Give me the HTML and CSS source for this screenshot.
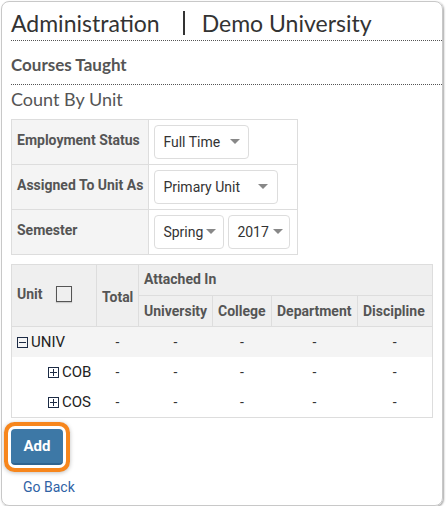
FILE: index.html
```html
<!DOCTYPE html>
<html>
<head>
<meta charset="utf-8">
<link rel="stylesheet" href="styles.css">
</head>
<body>
<div class="frame">
  <h1 class="title"><span>Administration</span><span class="sep"></span><span>Demo University</span></h1>
  <h2 class="section">Courses Taught</h2>
  <h3 class="subsection">Count By Unit</h3>

  <table class="filters">
    <tr>
      <th>Employment Status</th>
      <td><span class="select w-status"><span>Full Time</span><i class="caret"></i></span></td>
    </tr>
    <tr>
      <th>Assigned To Unit As</th>
      <td><span class="select w-unit"><span>Primary Unit</span><i class="caret"></i></span></td>
    </tr>
    <tr>
      <th>Semester</th>
      <td><span class="select w-sem"><span>Spring</span><i class="caret"></i></span><span class="select w-year"><span>2017</span><i class="caret"></i></span></td>
    </tr>
  </table>

  <table class="grid">
    <colgroup>
      <col class="c-unit"><col class="c-total"><col class="c-univ"><col class="c-coll"><col class="c-dept"><col class="c-disc">
    </colgroup>
    <thead>
      <tr>
        <th rowspan="2" class="unit-h"><span>Unit</span><span class="check"></span></th>
        <th rowspan="2" class="total-h">Total</th>
        <th colspan="4" class="attached">Attached In</th>
      </tr>
      <tr>
        <th>University</th><th>College</th><th>Department</th><th>Discipline</th>
      </tr>
    </thead>
    <tbody>
      <tr class="odd">
        <td class="name"><span class="tree minus"></span>UNIV</td>
        <td>-</td><td>-</td><td>-</td><td>-</td><td>-</td>
      </tr>
      <tr>
        <td class="name child"><span class="tree plus"></span>COB</td>
        <td>-</td><td>-</td><td>-</td><td>-</td><td>-</td>
      </tr>
      <tr>
        <td class="name child"><span class="tree plus"></span>COS</td>
        <td>-</td><td>-</td><td>-</td><td>-</td><td>-</td>
      </tr>
    </tbody>
  </table>

  <div class="actions">
    <button class="add">Add</button>
  </div>
  <a class="back" href="#">Go Back</a>
</div>
</body>
</html>
```

FILE: styles.css
```css
html, body {
  margin: 0;
  padding: 0;
  background: #fff;
}
body {
  font-family: Roboto, "Liberation Sans", sans-serif;
  color: #333;
}
.frame {
  margin: 1px 0 0 1px;
  width: 442px;
  height: 505px;
  box-sizing: border-box;
  border: 1px solid #c8c8c8;
  border-radius: 8px;
  box-shadow: 1px 1px 2px rgba(0,0,0,0.35);
  padding: 0 0 0 9px;
  overflow: hidden;
}
.title {
  margin: 0;
  font-family: Lato, "Open Sans", sans-serif;
  font-weight: 400;
  font-size: 23px;
  color: #333;
  line-height: 30px;
  padding: 6px 0 2px;
  border-bottom: 1px dotted #555;
  display: flex;
  align-items: center;
}
.sep {
  display: inline-block;
  width: 2px;
  height: 24px;
  background: #333;
  margin: 0 17px 0 23px;
}
.section {
  margin: 0;
  font-family: Lato, "Open Sans", sans-serif;
  font-weight: 700;
  font-size: 17px;
  color: #555;
  line-height: 20px;
  padding: 14px 0 9px;
  border-bottom: 1px dotted #555;
}
.subsection {
  margin: 0;
  font-family: Lato, "Open Sans", sans-serif;
  font-weight: 400;
  font-size: 18px;
  color: #555;
  line-height: 20px;
  padding: 4px 0 10px;
}
table {
  border-collapse: collapse;
}
.filters {
  border: 1px solid #ddd;
}
.filters th {
  background: #f4f4f4;
  border: 1px solid #ddd;
  text-align: left;
  font-size: 14px;
  font-weight: 700;
  color: #555;
  padding: 0 5px 5px 5px;
  vertical-align: middle;
  height: 45px;
  box-sizing: border-box;
  white-space: nowrap;
}
.filters td {
  border: 1px solid #ddd;
  padding: 0 7px 0 5px;
  height: 45px;
  box-sizing: border-box;
}
.select {
  display: inline-flex;
  align-items: center;
  justify-content: space-between;
  box-sizing: border-box;
  height: 34px;
  border: 1px solid #ddd;
  border-radius: 4px;
  padding: 0 8px 0 8px;
  font-size: 14px;
  color: #333;
  vertical-align: middle;
}
.select + .select {
  margin-left: 4px;
}
.w-status { width: 95px; padding-right: 8px; }
.w-unit { width: 124px; padding-right: 9px; }
.w-sem { width: 70px; padding-right: 7px; }
.w-year { width: 62px; padding-right: 6px; }
.caret {
  width: 0;
  height: 0;
  border-left: 5px solid transparent;
  border-right: 5px solid transparent;
  border-top: 5px solid #888;
  margin-bottom: 2px;
}
.grid {
  margin-top: 9px;
  table-layout: fixed;
  width: 421px;
  border: 1px solid #ddd;
  font-size: 14px;
}
.c-unit { width: 85px; }
.c-total { width: 42px; }
.c-univ { width: 74px; }
.c-coll { width: 59px; }
.c-dept { width: 86px; }
.c-disc { width: 75px; }
.grid thead th {
  background: #efefef;
  border: 1px solid #ddd;
  font-weight: 700;
  color: #555;
  text-align: left;
  padding: 0 5px;
  height: 31px;
  box-sizing: border-box;
  white-space: nowrap;
}
.grid thead th.attached {
  padding-top: 0;
  padding-bottom: 2px;
}
.unit-h {
  vertical-align: middle;
}
.unit-h span {
  vertical-align: middle;
}
.unit-h > span:first-child {
  position: relative;
  top: -2px;
}
.check {
  display: inline-block;
  width: 14px;
  height: 14px;
  border: 1px solid #555;
  margin-left: 13px;
  box-shadow: 0 1px 1px rgba(0,0,0,0.15);
  position: relative;
  top: -2px;
}
.total-h {
  padding-top: 2px !important;
}
.grid tbody td {
  height: 30px;
  text-align: center;
  color: #333;
  padding: 0;
  border: none;
  font-size: 14px;
}
.grid tbody tr.odd td {
  background: #f4f4f4;
}
.grid tbody td.name {
  text-align: left;
  padding-left: 5px;
  font-size: 15px;
  color: #222;
  white-space: nowrap;
}
.grid tbody td.child {
  padding-left: 36px;
}
.tree {
  display: inline-block;
  width: 9px;
  height: 9px;
  border: 1px solid #1c2b45;
  margin-right: 3px;
  position: relative;
  vertical-align: -1px;
}
.tree::before {
  content: "";
  position: absolute;
  left: 1px;
  right: 1px;
  top: 4px;
  height: 1px;
  background: #1c2b45;
}
.plus::after {
  content: "";
  position: absolute;
  top: 1px;
  bottom: 1px;
  left: 4px;
  width: 1px;
  background: #1c2b45;
}
.actions {
  margin-top: 11px;
}
.add {
  width: 52px;
  height: 36px;
  border: none;
  border-bottom: 2px solid #2f6490;
  border-radius: 4px;
  background: #3d78a6;
  color: #fff;
  font-family: Roboto, "Liberation Sans", sans-serif;
  font-weight: 700;
  font-size: 15px;
  padding: 0;
  box-shadow: 0 0 0 3px #fff, 0 0 0 7px #f7861c, 0 1px 4px 7px rgba(0,0,0,0.25);
}
.back {
  display: inline-block;
  margin: 14px 0 0 12px;
  color: #2f62a5;
  font-size: 14px;
  text-decoration: none;
}
```
